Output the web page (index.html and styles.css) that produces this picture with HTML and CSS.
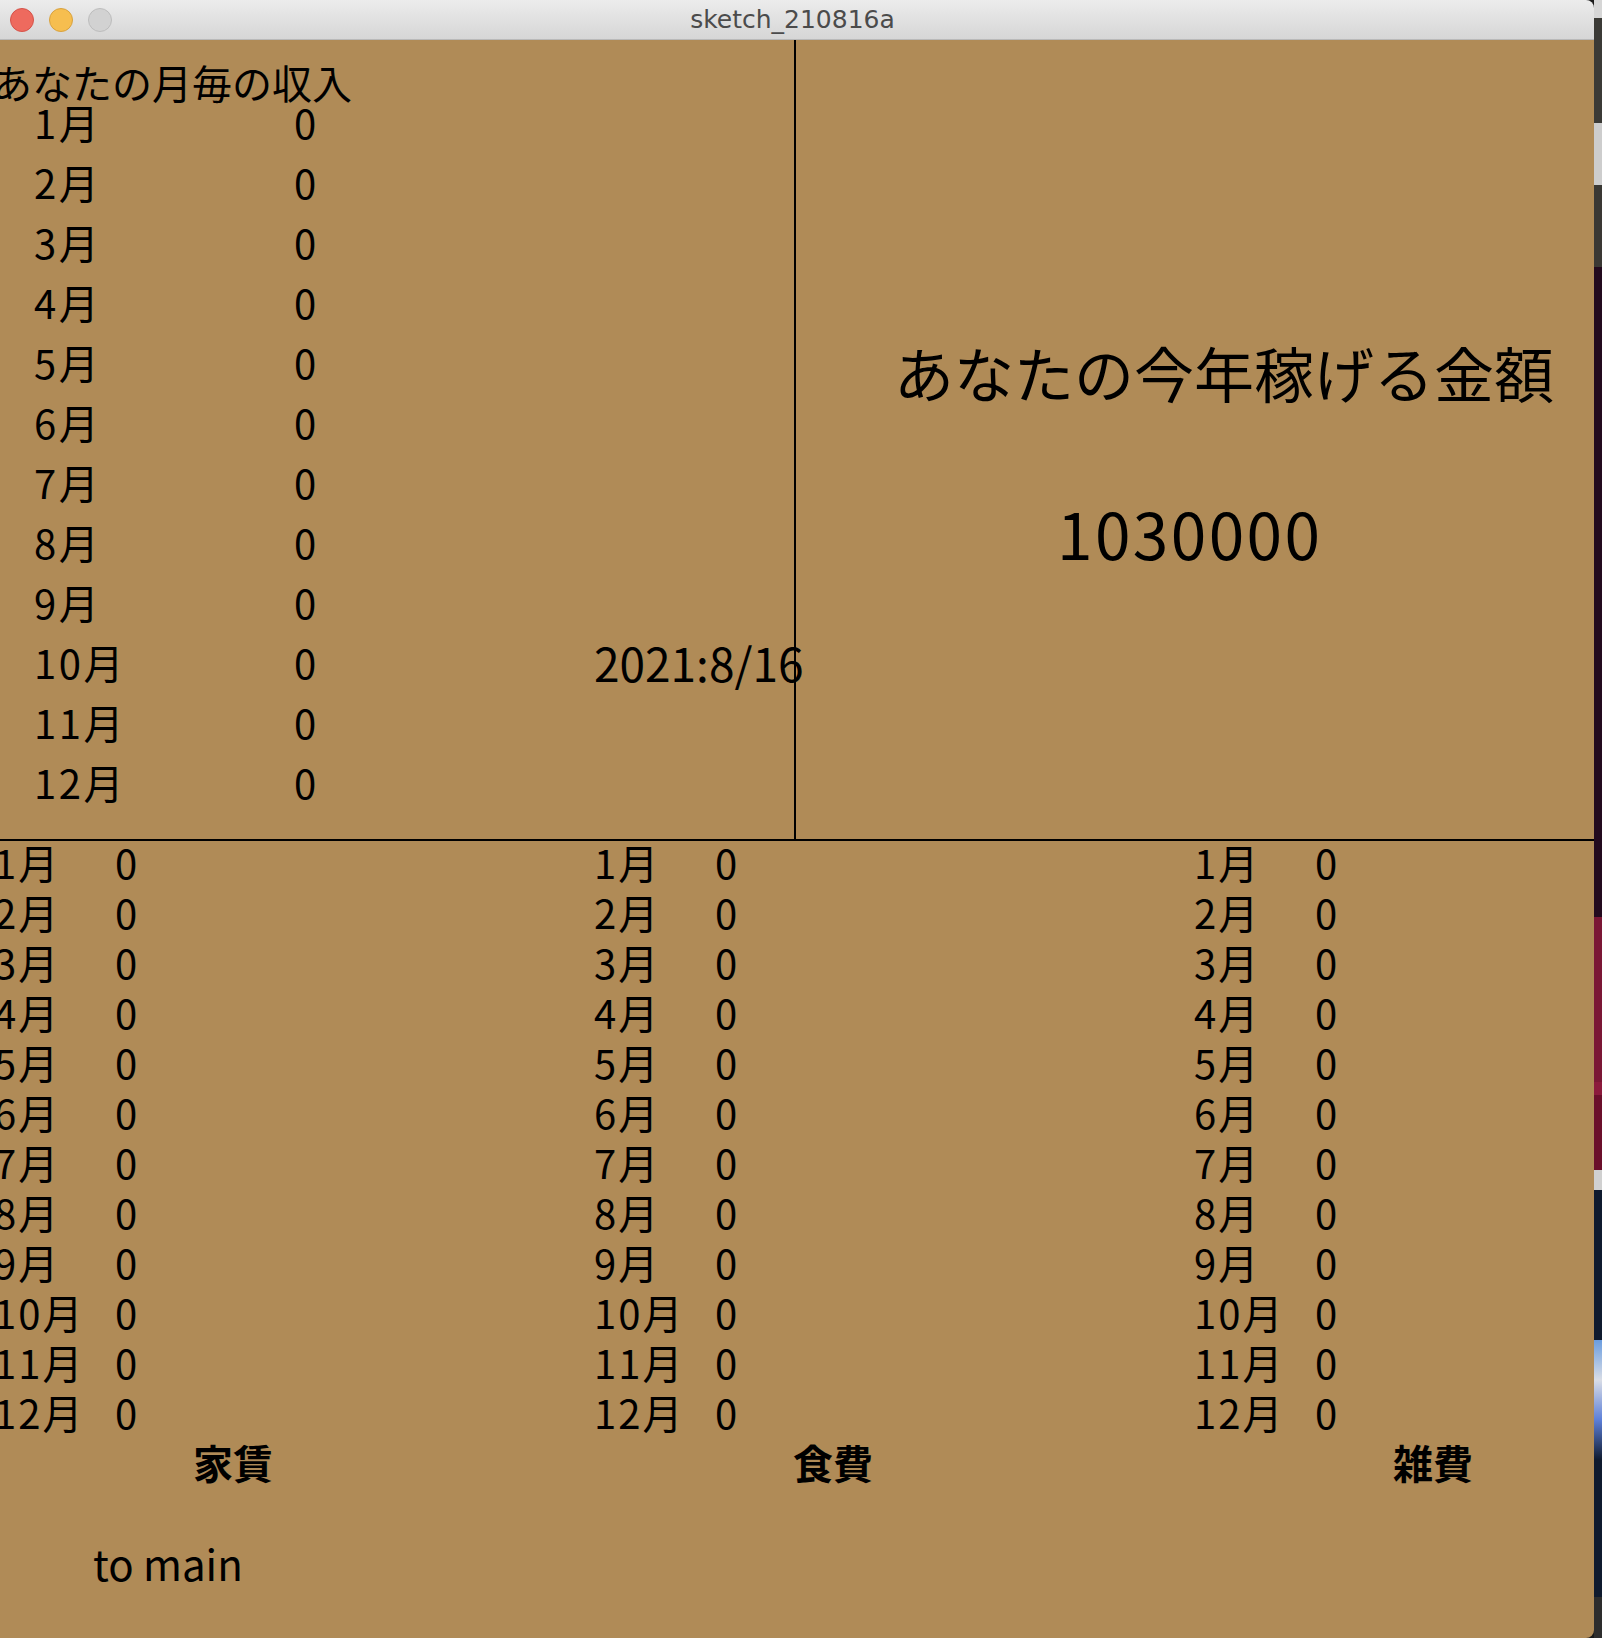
FILE: index.html
```html
<!DOCTYPE html>
<html lang="ja">
<head>
<meta charset="utf-8">
<title>sketch_210816a</title>
<link rel="stylesheet" href="styles.css">
</head>
<body>
<div class="screen">
  <div class="window">
    <div class="titlebar">
      <div class="lights">
        <span class="light red"></span>
        <span class="light yellow"></span>
        <span class="light gray"></span>
      </div>
      <div class="title">sketch_210816a</div>
      <div class="spacer"></div>
    </div>
    <div class="canvas">
      <div class="top">
        <div class="income">
          <div class="income-head">あなたの月毎の収入</div>
          <div class="income-rows">
            <div class="m">1月</div><div class="v">0</div><div class="d"></div>
            <div class="m">2月</div><div class="v">0</div><div class="d"></div>
            <div class="m">3月</div><div class="v">0</div><div class="d"></div>
            <div class="m">4月</div><div class="v">0</div><div class="d"></div>
            <div class="m">5月</div><div class="v">0</div><div class="d"></div>
            <div class="m">6月</div><div class="v">0</div><div class="d"></div>
            <div class="m">7月</div><div class="v">0</div><div class="d"></div>
            <div class="m">8月</div><div class="v">0</div><div class="d"></div>
            <div class="m">9月</div><div class="v">0</div><div class="d"></div>
            <div class="m">10月</div><div class="v">0</div><div class="d">2021:8/16</div>
            <div class="m">11月</div><div class="v">0</div><div class="d"></div>
            <div class="m">12月</div><div class="v">0</div><div class="d"></div>
          </div>
        </div>
        <div class="yearly">
          <div class="yearly-title">あなたの今年稼げる金額</div>
          <div class="yearly-value">1030000</div>
        </div>
      </div>
      <div class="expenses">
        <div class="exp-col">
          <div class="exp-rows">
            <div class="m">1月</div><div>0</div>
            <div class="m">2月</div><div>0</div>
            <div class="m">3月</div><div>0</div>
            <div class="m">4月</div><div>0</div>
            <div class="m">5月</div><div>0</div>
            <div class="m">6月</div><div>0</div>
            <div class="m">7月</div><div>0</div>
            <div class="m">8月</div><div>0</div>
            <div class="m">9月</div><div>0</div>
            <div class="m">10月</div><div>0</div>
            <div class="m">11月</div><div>0</div>
            <div class="m">12月</div><div>0</div>
          </div>
          <div class="exp-label">家賃</div>
        </div>
        <div class="exp-col">
          <div class="exp-rows">
            <div class="m">1月</div><div>0</div>
            <div class="m">2月</div><div>0</div>
            <div class="m">3月</div><div>0</div>
            <div class="m">4月</div><div>0</div>
            <div class="m">5月</div><div>0</div>
            <div class="m">6月</div><div>0</div>
            <div class="m">7月</div><div>0</div>
            <div class="m">8月</div><div>0</div>
            <div class="m">9月</div><div>0</div>
            <div class="m">10月</div><div>0</div>
            <div class="m">11月</div><div>0</div>
            <div class="m">12月</div><div>0</div>
          </div>
          <div class="exp-label">食費</div>
        </div>
        <div class="exp-col">
          <div class="exp-rows">
            <div class="m">1月</div><div>0</div>
            <div class="m">2月</div><div>0</div>
            <div class="m">3月</div><div>0</div>
            <div class="m">4月</div><div>0</div>
            <div class="m">5月</div><div>0</div>
            <div class="m">6月</div><div>0</div>
            <div class="m">7月</div><div>0</div>
            <div class="m">8月</div><div>0</div>
            <div class="m">9月</div><div>0</div>
            <div class="m">10月</div><div>0</div>
            <div class="m">11月</div><div>0</div>
            <div class="m">12月</div><div>0</div>
          </div>
          <div class="exp-label">雑費</div>
        </div>
      </div>
      <div class="to-main">to main</div>
    </div>
  </div>
  <div class="desk"></div>
</div>
</body>
</html>
```

FILE: styles.css
```css
html, body {
  margin: 0;
  padding: 0;
}
body {
  width: 1602px;
  height: 1638px;
  overflow: hidden;
  background: #1a1a1a;
  font-family: "Noto Sans CJK JP", sans-serif;
  color: #000;
}
.screen {
  display: flex;
  width: 1602px;
  height: 1638px;
}
.window {
  width: 1594px;
  height: 1638px;
  display: flex;
  flex-direction: column;
  overflow: hidden;
  border-radius: 0 8px 8px 0;
  flex: none;
}
.titlebar {
  height: 39px;
  border-bottom: 1px solid #b9b9b9;
  background: linear-gradient(#ececec, #d6d6d6);
  display: grid;
  grid-template-columns: 1fr auto 1fr;
  align-items: center;
  flex: none;
}
.lights {
  display: flex;
  gap: 15px;
  padding-left: 10px;
}
.light {
  width: 22px;
  height: 22px;
  border-radius: 50%;
  border: 1px solid;
}
.light.red { background: #ee6a5e; border-color: #d5534a; }
.light.yellow { background: #f6be4f; border-color: #d8a23f; }
.light.gray { background: #d2d2d2; border-color: #bdbdbd; }
.title {
  font-family: "DejaVu Sans", sans-serif;
  font-size: 25px;
  line-height: 39px;
  color: #4b4b4b;
  padding-right: 9px;
}
.canvas {
  flex: 1;
  background: #b08b57;
  overflow: hidden;
}
.top {
  height: 799px;
  border-bottom: 2px solid #000;
  display: flex;
}
.income {
  width: 794px;
  border-right: 2px solid #000;
  padding-top: 32px;
  box-sizing: content-box;
  flex: none;
}
.income-head {
  font-size: 40px;
  line-height: 20px;
  margin-left: -8px;
  white-space: nowrap;
}
.income-rows {
  display: grid;
  grid-template-columns: 260px 300px auto;
  grid-auto-rows: 60px;
  padding-left: 34px;
  font-size: 40px;
  line-height: 60px;
  white-space: nowrap;
}
.m {
  letter-spacing: 2.6px;
}
.income-rows .d {
  font-size: 46px;
  position: relative;
  z-index: 1;
}
.yearly {
  flex: 1;
  padding-top: 302px;
}
.yearly-title {
  font-size: 60px;
  line-height: 60px;
  padding-left: 98px;
  white-space: nowrap;
}
.yearly-value {
  font-size: 64px;
  line-height: 66px;
  margin-top: 97px;
  padding-left: 261px;
  letter-spacing: 2.4px;
}
.expenses {
  display: grid;
  grid-template-columns: 600px 600px 600px;
  margin-left: -6px;
  margin-top: -4px;
}
.exp-rows {
  display: grid;
  grid-template-columns: 121px auto;
  grid-auto-rows: 50px;
  font-size: 40px;
  line-height: 50px;
  white-space: nowrap;
}
.exp-rows .m {
  letter-spacing: 2px;
}
.exp-label {
  font-size: 40px;
  font-weight: 700;
  line-height: 50px;
  padding-left: 199px;
}
.to-main {
  font-size: 42px;
  line-height: 50px;
  margin-top: 51px;
  padding-left: 93px;
}
.desk {
  width: 8px;
  height: 1638px;
  flex: none;
  background: linear-gradient(
    #d6d6d6 0px, #d6d6d6 18px,
    #3b3a36 18px, #3b3a36 123px,
    #cdcdcd 123px, #cdcdcd 185px,
    #3a3834 185px, #3a3834 267px,
    #230a1e 267px, #230a1e 917px,
    #7b1735 917px, #7b1735 1082px,
    #8c1a3c 1082px, #8c1a3c 1095px,
    #6b0f2b 1095px, #6b0f2b 1170px,
    #d0d0d0 1170px, #d0d0d0 1190px,
    #0f1a2e 1190px, #0f1a2e 1340px,
    #6a9de0 1340px, #d9dde6 1380px, #5c7fd8 1420px, #0f1a2e 1460px,
    #0f1a2e 1597px,
    #2d2d2d 1597px, #2d2d2d 1638px
  );
}
```
